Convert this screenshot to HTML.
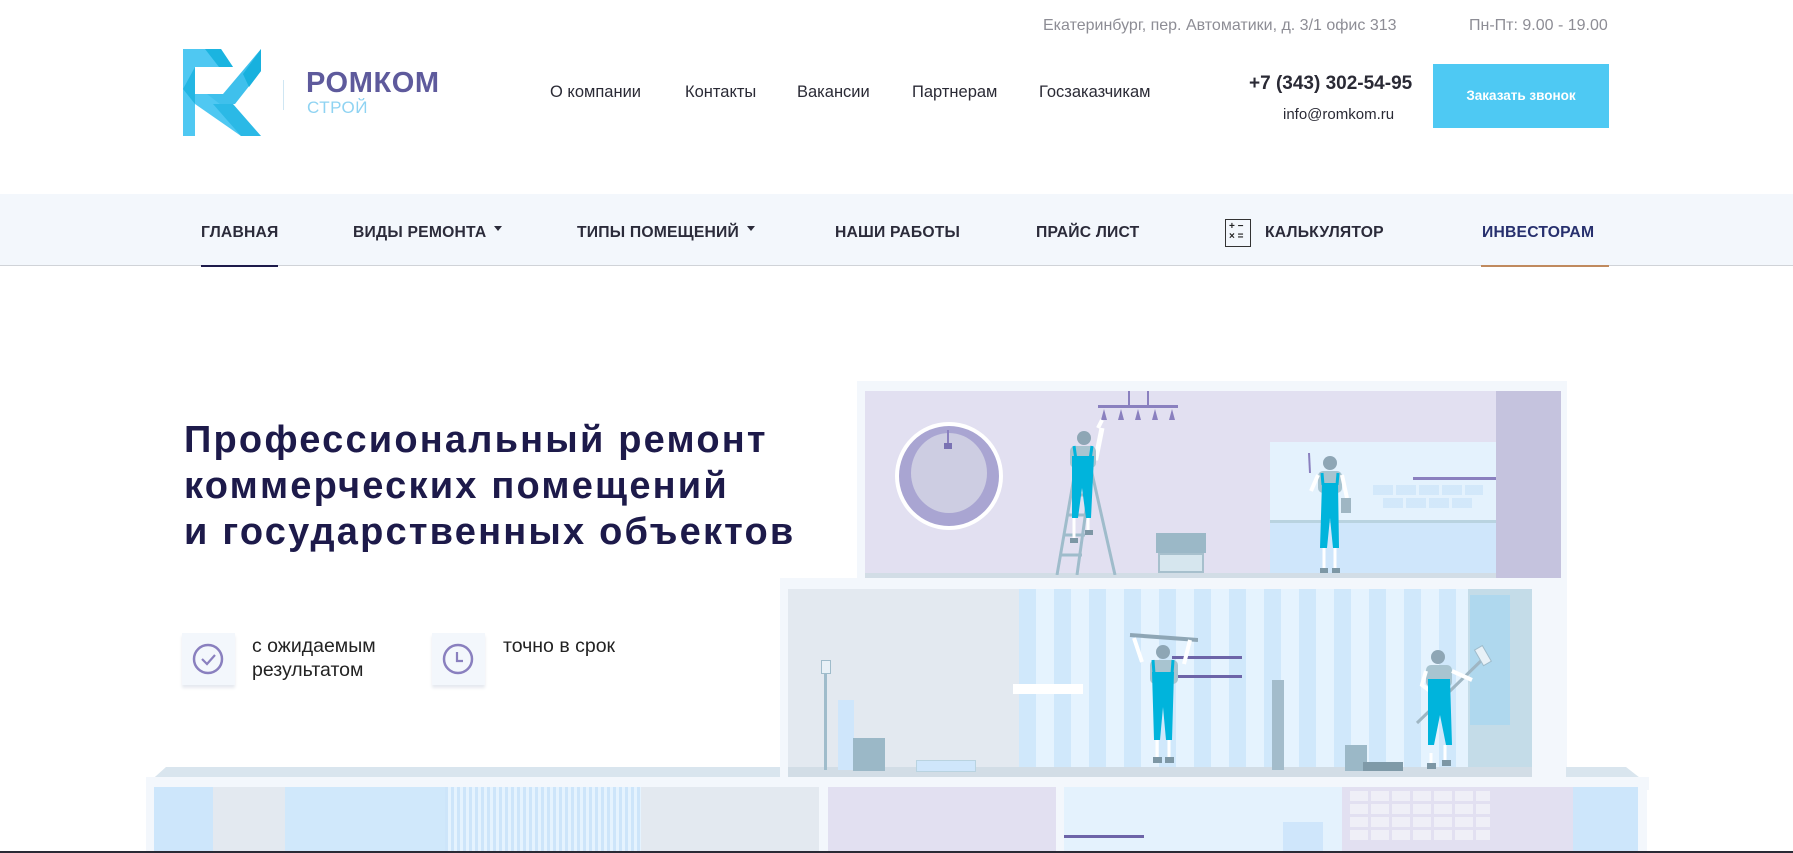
<!DOCTYPE html>
<html><head><meta charset="utf-8">
<style>
*{margin:0;padding:0;box-sizing:border-box}
html,body{width:1793px;height:853px;overflow:hidden;background:#fff;font-family:"Liberation Sans",sans-serif}
.a{position:absolute}
.top{color:#8d8d95;font-size:16px;top:17px}
.nl{top:83px;font-size:16.5px;color:#2a2a35}
.mn{top:224px;font-size:15.7px;font-weight:bold;color:#2b2b3a;letter-spacing:.2px}
.tri{display:inline-block;border-left:4px solid transparent;border-right:4px solid transparent;border-top:5px solid #2b2b3a;vertical-align:middle;margin-left:8px;position:relative;top:-4px}
h1{position:absolute;left:184px;top:417px;font-size:38px;line-height:46px;color:#1d1a4a;font-weight:bold;letter-spacing:2.2px}
.fb{width:53px;height:52px;background:#f3f7fc;box-shadow:0 3px 3px #e6e9ef;top:633px}
.ft{font-size:19.5px;color:#222;line-height:24px;top:634px}
.r{position:absolute}
</style></head><body>

<div class="a top" style="left:1043px">Екатеринбург, пер. Автоматики, д. 3/1 офис 313</div>
<div class="a top" style="left:1469px">Пн-Пт: 9.00 - 19.00</div>

<svg class="a" style="left:183px;top:49px" width="80" height="87" viewBox="0 0 80 87">
<polygon points="0,0 38,0 50,18 12,18 12,87 0,87" fill="#4fc8f2"/>
<polygon points="22,0 38,0 50,18 36,18" fill="#1bb4e0"/>
<polygon points="78,0 78,22 52,55 12,55 12,45 40,45" fill="#3fc0ec"/>
<polygon points="60,25 78,0 78,22 66,38" fill="#18b1de"/>
<polygon points="12,45 24,45 78,87 58,87 12,55" fill="#4fc8f2"/>
<polygon points="30,55 50,55 78,87 58,87" fill="#2bb9e6"/>
<polygon points="0,40 12,18 12,55" fill="#23b6e3"/>
</svg>
<div class="a" style="left:283px;top:80px;width:1px;height:30px;background:#cfe6f3"></div>
<div class="a" style="left:306px;top:67px;font-size:29px;font-weight:bold;color:#5e5a9c;letter-spacing:.6px">РОМКОМ</div>
<div class="a" style="left:307px;top:98px;font-size:17px;color:#8fd3f2;letter-spacing:.5px">СТРОЙ</div>

<div class="a nl" style="left:550px">О компании</div>
<div class="a nl" style="left:685px">Контакты</div>
<div class="a nl" style="left:797px">Вакансии</div>
<div class="a nl" style="left:912px">Партнерам</div>
<div class="a nl" style="left:1039px">Госзаказчикам</div>

<div class="a" style="left:1249px;top:73px;font-size:19px;font-weight:bold;color:#2a2a35">+7 (343) 302-54-95</div>
<div class="a" style="left:1283px;top:106px;font-size:15px;color:#2a2a35">info@romkom.ru</div>
<div class="a" style="left:1433px;top:64px;width:176px;height:64px;background:#4ec9f3;color:#fff;font-size:13.5px;font-weight:bold;text-align:center;line-height:64px">Заказать звонок</div>

<div class="a" style="left:0;top:194px;width:1793px;height:72px;background:#f3f7fc;border-bottom:1px solid #d0d3d8"></div>
<div class="a" style="left:201px;top:265px;width:77px;height:2px;background:#1d1a4a"></div>
<div class="a" style="left:1481px;top:265px;width:128px;height:2px;background:#c08a5e"></div>
<div class="a mn" style="left:201px">ГЛАВНАЯ</div>
<div class="a mn" style="left:353px">ВИДЫ РЕМОНТА<span class="tri"></span></div>
<div class="a mn" style="left:577px">ТИПЫ ПОМЕЩЕНИЙ<span class="tri"></span></div>
<div class="a mn" style="left:835px">НАШИ РАБОТЫ</div>
<div class="a mn" style="left:1036px">ПРАЙС ЛИСТ</div>
<div class="a" style="left:1225px;top:219px;width:26px;height:28px;border:1.5px solid #333;font-size:10px;line-height:10px;padding:2px 0 0 3px;color:#222;font-weight:bold">+&nbsp;−<br>×&nbsp;=</div>
<div class="a mn" style="left:1265px">КАЛЬКУЛЯТОР</div>
<div class="a mn" style="left:1482px;color:#27306e">ИНВЕСТОРАМ</div>

<h1>Профессиональный ремонт<br>коммерческих помещений<br>и государственных объектов</h1>

<div class="a fb" style="left:182px"><svg width="53" height="52"><circle cx="26" cy="26" r="14" fill="none" stroke="#8a80bf" stroke-width="2.5"/><path d="M20 26 l5 5 l8 -9" fill="none" stroke="#8a80bf" stroke-width="2.2"/></svg></div>
<div class="a ft" style="left:252px">с ожидаемым<br>результатом</div>
<div class="a fb" style="left:432px"><svg width="53" height="52"><circle cx="26" cy="26" r="14" fill="none" stroke="#8a80bf" stroke-width="2.5"/><path d="M25 19 v9 h6" fill="none" stroke="#8a80bf" stroke-width="2.2"/></svg></div>
<div class="a ft" style="left:503px">точно в срок</div>

<div class="r" style="left:857px;top:381px;width:710px;height:210px;background:#f3f7fc"></div>
<div class="r" style="left:865px;top:391px;width:696px;height:182px;background:#e2e0f1"></div>
<div class="r" style="left:1496px;top:391px;width:65px;height:191px;background:#c5c3de"></div>
<div class="r" style="left:865px;top:573px;width:631px;height:9px;background:#d2dde6"></div>
<div class="r" style="left:1270px;top:442px;width:226px;height:80px;background:#e4f2fd"></div>
<div class="r" style="left:1270px;top:520px;width:226px;height:53px;background:#cfe6fb;border-top:3px solid #b9d3e0"></div>
<div class="r" style="left:1413px;top:477px;width:83px;height:3px;background:#8a80bf"></div>
<div class="r" style="left:1373px;top:485px;width:110px;height:10px;background:repeating-linear-gradient(90deg,#c7e2f8 0 20px,transparent 20px 23px);opacity:.6"></div>
<div class="r" style="left:1383px;top:498px;width:90px;height:10px;background:repeating-linear-gradient(90deg,#c7e2f8 0 20px,transparent 20px 23px);opacity:.6"></div>
<div class="r" style="left:895px;top:422px;width:108px;height:108px;border-radius:50%;background:#fff"></div>
<div class="r" style="left:899px;top:426px;width:100px;height:100px;border-radius:50%;background:#a9a5d2"></div>
<div class="r" style="left:911px;top:433px;width:76px;height:80px;border-radius:50%;background:#cdcde2"></div>
<div class="r" style="left:947px;top:430px;width:2px;height:14px;background:#8a80bf"></div>
<div class="r" style="left:944px;top:443px;width:8px;height:6px;background:#7a72b3"></div>
<div class="r" style="left:1128px;top:391px;width:2px;height:14px;background:#8a80bf"></div>
<div class="r" style="left:1147px;top:391px;width:2px;height:14px;background:#8a80bf"></div>
<div class="r" style="left:1098px;top:405px;width:80px;height:3px;background:#8a80bf"></div>
<svg class="r" style="left:1098px;top:407px" width="80" height="14"><g fill="#8a80bf"><polygon points="3,13 6,2 9,13"/><polygon points="20,13 23,2 26,13"/><polygon points="37,13 40,2 43,13"/><polygon points="54,13 57,2 60,13"/><polygon points="71,13 74,2 77,13"/></g></svg>
<svg class="r" style="left:1055px;top:460px" width="80" height="115"><g stroke="#9fbccb" stroke-width="3" fill="none"><path d="M22 0 L2 115"/><path d="M38 0 L22 115"/><path d="M24 0 L34 0 L60 115"/><path d="M6 95 L27 95 M10 75 L30 75 M13 55 L33 55 M16 35 L36 35"/></g></svg>
<svg class="r" style="left:1058px;top:418px" width="60" height="160"><g><path d="M40 10 L44 2" stroke="#fff" stroke-width="4"/><path d="M26 40 L38 40 L44 10" stroke="#fff" stroke-width="5" fill="none"/><circle cx="26" cy="20" r="7" fill="#8ea6b5"/><rect x="12" y="28" width="26" height="22" rx="5" fill="#a8c4d0"/><path d="M14 38 L36 38 L33 100 L28 100 L24 70 L20 100 L14 100 Z" fill="#00b4dc"/><path d="M16 28 L18 42 M34 28 L32 42" stroke="#00b4dc" stroke-width="3"/><path d="M16 100 L16 120 M30 100 L30 112" stroke="#fff" stroke-width="3"/><rect x="12" y="120" width="8" height="5" fill="#7d97a5"/><rect x="27" y="112" width="8" height="5" fill="#7d97a5"/></g></svg>
<div class="r" style="left:1156px;top:533px;width:50px;height:20px;background:#9bb8c7"></div>
<div class="r" style="left:1158px;top:553px;width:46px;height:20px;background:#d6e6ee;border:2px solid #a7c0cd"></div>
<svg class="r" style="left:1305px;top:453px" width="50" height="125"><circle cx="25" cy="10" r="7" fill="#8ea6b5"/><rect x="13" y="18" width="24" height="22" rx="5" fill="#a8c4d0"/><path d="M13 22 L6 38 M37 22 L42 45" stroke="#fff" stroke-width="4"/><path d="M4 0 L5 20" stroke="#8a80bf" stroke-width="2"/><path d="M17 30 L33 30 L34 95 L28 95 L25 65 L22 95 L15 95 Z" fill="#00b4dc"/><path d="M17 20 L18 32 M33 20 L32 32" stroke="#00b4dc" stroke-width="3"/><rect x="36" y="45" width="10" height="15" fill="#9fb6c3"/><path d="M19 95 V115 M30 95 V115" stroke="#fff" stroke-width="3"/><rect x="15" y="115" width="8" height="5" fill="#7d97a5"/><rect x="27" y="115" width="8" height="5" fill="#7d97a5"/></svg>

<div class="r" style="left:780px;top:578px;width:787px;height:11px;background:#f3f7fc"></div>
<div class="r" style="left:780px;top:589px;width:8px;height:188px;background:#f3f7fc"></div>
<div class="r" style="left:1532px;top:589px;width:35px;height:188px;background:#f3f7fc"></div>
<div class="r" style="left:788px;top:589px;width:744px;height:178px;background:#e3e9f0"></div>
<div class="r" style="left:1019px;top:589px;width:449px;height:178px;background:repeating-linear-gradient(90deg,#d0e8fb 0 17px,#e5f3fe 17px 35px)"></div>
<div class="r" style="left:1468px;top:589px;width:64px;height:178px;background:#c4dce8"></div>
<div class="r" style="left:1470px;top:595px;width:40px;height:130px;background:#aad7ef;opacity:.8"></div>
<div class="r" style="left:1013px;top:684px;width:70px;height:10px;background:#fff"></div>
<div class="r" style="left:788px;top:767px;width:744px;height:10px;background:#d2dde6"></div>
<div class="r" style="left:1172px;top:656px;width:70px;height:3px;background:#6d64a8"></div>
<div class="r" style="left:1177px;top:675px;width:65px;height:3px;background:#6d64a8"></div>
<div class="r" style="left:1272px;top:680px;width:12px;height:90px;background:#a3bccb"></div>
<div class="r" style="left:824px;top:665px;width:3px;height:105px;background:#9fbccb"></div>
<div class="r" style="left:821px;top:660px;width:10px;height:14px;background:#e8f1f7;border:1px solid #9fbccb"></div>
<div class="r" style="left:838px;top:700px;width:16px;height:70px;background:#cfe6fb"></div>
<div class="r" style="left:853px;top:738px;width:32px;height:33px;background:#9bb8c7"></div>
<div class="r" style="left:916px;top:760px;width:60px;height:12px;background:#cfe6fb;border:1px solid #b9d3e0"></div>
<div class="r" style="left:1345px;top:745px;width:22px;height:26px;background:#9bb8c7"></div>
<div class="r" style="left:1363px;top:762px;width:40px;height:9px;background:#7f9aa8"></div>
<svg class="r" style="left:1128px;top:632px" width="70" height="140"><path d="M2 3 L70 8" stroke="#8ea6b5" stroke-width="4"/><path d="M6 6 L14 30 M62 8 L56 32" stroke="#fff" stroke-width="4"/><circle cx="35" cy="20" r="7" fill="#8ea6b5"/><rect x="22" y="28" width="28" height="24" rx="5" fill="#a8c4d0"/><path d="M24 40 L46 40 L44 108 L38 108 L35 75 L32 108 L26 108 Z" fill="#00b4dc"/><path d="M25 28 L26 42 M45 28 L44 42" stroke="#00b4dc" stroke-width="3"/><path d="M29 108 V125 M41 108 V125" stroke="#fff" stroke-width="3"/><rect x="25" y="125" width="9" height="6" fill="#7d97a5"/><rect x="37" y="125" width="9" height="6" fill="#7d97a5"/></svg>
<svg class="r" style="left:1412px;top:645px" width="85" height="130"><path d="M5 78 L75 10" stroke="#9fb6c3" stroke-width="3"/><rect x="66" y="2" width="9" height="18" fill="#e8f1f7" stroke="#9fbccb" transform="rotate(-30 70 10)"/><circle cx="26" cy="12" r="7" fill="#8ea6b5"/><rect x="14" y="20" width="26" height="22" rx="5" fill="#a8c4d0"/><path d="M14 26 L10 40 L30 55 M40 26 L60 35" stroke="#fff" stroke-width="4" fill="none"/><path d="M16 34 L38 34 L40 100 L34 100 L28 70 L22 100 L16 100 Z" fill="#00b4dc"/><path d="M19 108 V118 M33 100 V115" stroke="#fff" stroke-width="3"/><rect x="15" y="118" width="9" height="6" fill="#7d97a5"/><rect x="30" y="115" width="9" height="6" fill="#7d97a5"/></svg>

<svg class="r" style="left:146px;top:765px" width="1503" height="25"><polygon points="0,20 20,2 634,2 634,20" fill="#d9e5ee"/><polygon points="1420,2 1480,2 1503,20 1420,20" fill="#d9e5ee"/><rect x="0" y="12" width="1503" height="13" fill="#f3f7fc"/></svg>
<div class="r" style="left:146px;top:787px;width:1501px;height:66px;background:#f3f7fc"></div>
<div class="r" style="left:154px;top:787px;width:59px;height:66px;background:#cde6fb"></div>
<div class="r" style="left:213px;top:787px;width:72px;height:66px;background:#e3e9f0"></div>
<div class="r" style="left:285px;top:787px;width:160px;height:66px;background:#d0e8fb"></div>
<div class="r" style="left:445px;top:787px;width:196px;height:66px;background:repeating-linear-gradient(90deg,#cde5fa 0 3px,#e5f3fe 3px 6px)"></div>
<div class="r" style="left:641px;top:787px;width:178px;height:66px;background:#e3e9f0"></div>
<div class="r" style="left:828px;top:787px;width:228px;height:66px;background:#e2e0f1"></div>
<div class="r" style="left:1064px;top:787px;width:278px;height:66px;background:#e4f2fd"></div>
<div class="r" style="left:1064px;top:835px;width:80px;height:3px;background:#6d64a8"></div>
<div class="r" style="left:1283px;top:822px;width:40px;height:31px;background:#cfe6fb"></div>
<div class="r" style="left:1342px;top:787px;width:231px;height:66px;background:#e2e0f1"></div>
<div class="r" style="left:1350px;top:790px;width:140px;height:50px;background:repeating-linear-gradient(90deg,#f1f1f8 0 18px,transparent 18px 21px);opacity:.9;-webkit-mask:repeating-linear-gradient(0deg,#000 0 10px,transparent 10px 13px)"></div>
<div class="r" style="left:1573px;top:787px;width:65px;height:66px;background:#cde6fb"></div>
<div class="r" style="left:0;top:851px;width:1793px;height:2px;background:#2a2a35"></div>
</body></html>
